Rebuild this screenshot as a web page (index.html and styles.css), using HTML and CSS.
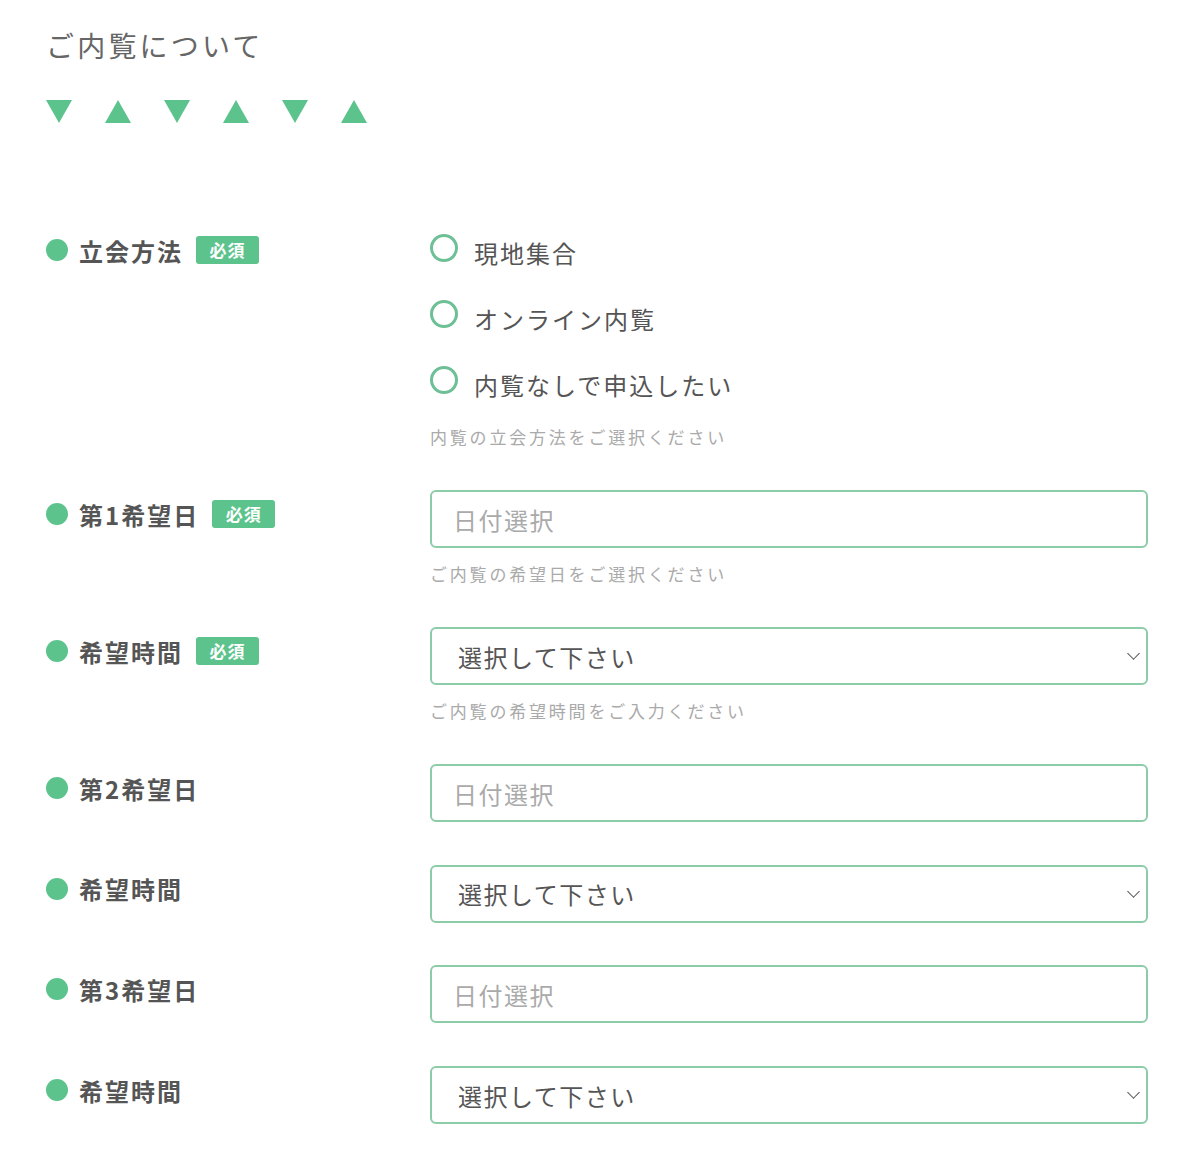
FILE: index.html
```html
<!DOCTYPE html>
<html lang="ja">
<head>
    <meta charset="utf-8">
    <title>ご内覧について</title>
    <link rel="stylesheet" href="styles.css">
</head>
<body>
    <h2 class="section-title">ご内覧について</h2>
    <div class="arrows">
        <svg width="26" height="23" viewBox="0 0 26 23"><polygon points="0,0 26,0 13,23" /></svg>
        <svg width="26" height="23" viewBox="0 0 26 23"><polygon points="13,0 26,23 0,23" /></svg>
        <svg width="26" height="23" viewBox="0 0 26 23"><polygon points="0,0 26,0 13,23" /></svg>
        <svg width="26" height="23" viewBox="0 0 26 23"><polygon points="13,0 26,23 0,23" /></svg>
        <svg width="26" height="23" viewBox="0 0 26 23"><polygon points="0,0 26,0 13,23" /></svg>
        <svg width="26" height="23" viewBox="0 0 26 23"><polygon points="13,0 26,23 0,23" /></svg>
    </div>

    <form class="visit-form" name="visitForm">
        <div class="row has-hint">
            <div class="field-label">立会方法<span class="badge">必須</span></div>
            <div class="field-body">
                <div class="radio-list">
                    <label class="radio"><input type="radio" name="method" value="1"><span class="radio-mark"></span>現地集合</label>
                    <label class="radio"><input type="radio" name="method" value="2"><span class="radio-mark"></span>オンライン内覧</label>
                    <label class="radio"><input type="radio" name="method" value="3"><span class="radio-mark"></span>内覧なしで申込したい</label>
                </div>
                <p class="hint hint-radio">内覧の立会方法をご選択ください</p>
            </div>
        </div>

        <div class="row has-hint">
            <div class="field-label">第1希望日<span class="badge">必須</span></div>
            <div class="field-body">
                <input type="text" class="text-input" placeholder="日付選択">
                <p class="hint">ご内覧の希望日をご選択ください</p>
            </div>
        </div>

        <div class="row has-hint">
            <div class="field-label">希望時間<span class="badge">必須</span></div>
            <div class="field-body">
                <div class="select-wrap">
                    <select class="select-input">
                        <option value="">選択して下さい</option>
                    </select>
                </div>
                <p class="hint">ご内覧の希望時間をご入力ください</p>
            </div>
        </div>

        <div class="row">
            <div class="field-label">第2希望日</div>
            <div class="field-body">
                <input type="text" class="text-input" placeholder="日付選択">
            </div>
        </div>

        <div class="row">
            <div class="field-label">希望時間</div>
            <div class="field-body">
                <div class="select-wrap">
                    <select class="select-input">
                        <option value="">選択して下さい</option>
                    </select>
                </div>
            </div>
        </div>

        <div class="row">
            <div class="field-label">第3希望日</div>
            <div class="field-body">
                <input type="text" class="text-input" placeholder="日付選択">
            </div>
        </div>

        <div class="row">
            <div class="field-label">希望時間</div>
            <div class="field-body">
                <div class="select-wrap">
                    <select class="select-input">
                        <option value="">選択して下さい</option>
                    </select>
                </div>
            </div>
        </div>
    </form>
</body>
</html>
```

FILE: styles.css
```css
body {
    font-family: "Noto Sans CJK JP", "Noto Sans", sans-serif;
    background-color: #fff;
    color: #555;
    margin: 0;
    padding: 25px 52px 0 46px;
}

.section-title {
    margin: 0;
    font-size: 28px;
    line-height: 40px;
    font-weight: normal;
    letter-spacing: 3.2px;
    color: #666;
}

.arrows {
    display: flex;
    gap: 33px;
    margin-top: 35px;
    height: 23px;
}

.arrows svg {
    display: block;
    fill: #5cc38c;
}

.visit-form {
    margin-top: 103px;
}

.row {
    display: grid;
    grid-template-columns: 384px 1fr;
    margin-bottom: 42.7px;
}

.row.has-hint {
    margin-bottom: 40px;
}

.field-label {
    display: flex;
    align-items: center;
    height: 36px;
    margin-top: 6px;
    font-size: 24px;
    font-weight: bold;
    letter-spacing: 2px;
    color: #555;
}

.field-label::before {
    content: "";
    width: 22px;
    height: 22px;
    border-radius: 50%;
    background: #5cc38c;
    margin-right: 11px;
    flex-shrink: 0;
}

.badge {
    display: inline-block;
    margin-left: 13px;
    width: 63px;
    height: 28px;
    line-height: 28px;
    text-align: center;
    background: #5cc38c;
    color: #fff;
    font-size: 17px;
    letter-spacing: 1px;
    border-radius: 3px;
}

.radio-list {
    display: flex;
    flex-direction: column;
    gap: 26px;
    padding-top: 6px;
}

.radio {
    display: flex;
    align-items: center;
    height: 40px;
    font-size: 24px;
    letter-spacing: 2px;
    color: #555;
    cursor: pointer;
}

.radio input {
    display: none;
}

.radio-mark {
    width: 28px;
    height: 28px;
    box-sizing: border-box;
    border: 3px solid #6dbf95;
    border-radius: 50%;
    margin-right: 16px;
    margin-top: -8px;
}

.hint {
    margin: 13px 0 0;
    font-size: 17px;
    line-height: 26px;
    letter-spacing: 2.8px;
    color: #aaa;
}

.hint-radio {
    margin-top: 20px;
}

.text-input,
.select-input {
    display: block;
    width: 100%;
    height: 58px;
    box-sizing: border-box;
    border: 2px solid #8dcca9;
    border-radius: 6px;
    background: #fff;
    font-family: inherit;
    font-size: 24px;
    letter-spacing: 1.5px;
    color: #555;
    outline: none;
}

.text-input {
    padding: 0 21px;
}

.text-input::placeholder {
    color: #aaa;
}

.select-input {
    -webkit-appearance: none;
    appearance: none;
    padding: 0 40px 0 26px;
    cursor: pointer;
}

.select-wrap {
    position: relative;
}

.select-wrap::after {
    content: "";
    position: absolute;
    right: 10px;
    top: 22px;
    width: 8px;
    height: 8px;
    border-right: 1.5px solid #555;
    border-bottom: 1.5px solid #555;
    transform: rotate(45deg);
    pointer-events: none;
}
```
